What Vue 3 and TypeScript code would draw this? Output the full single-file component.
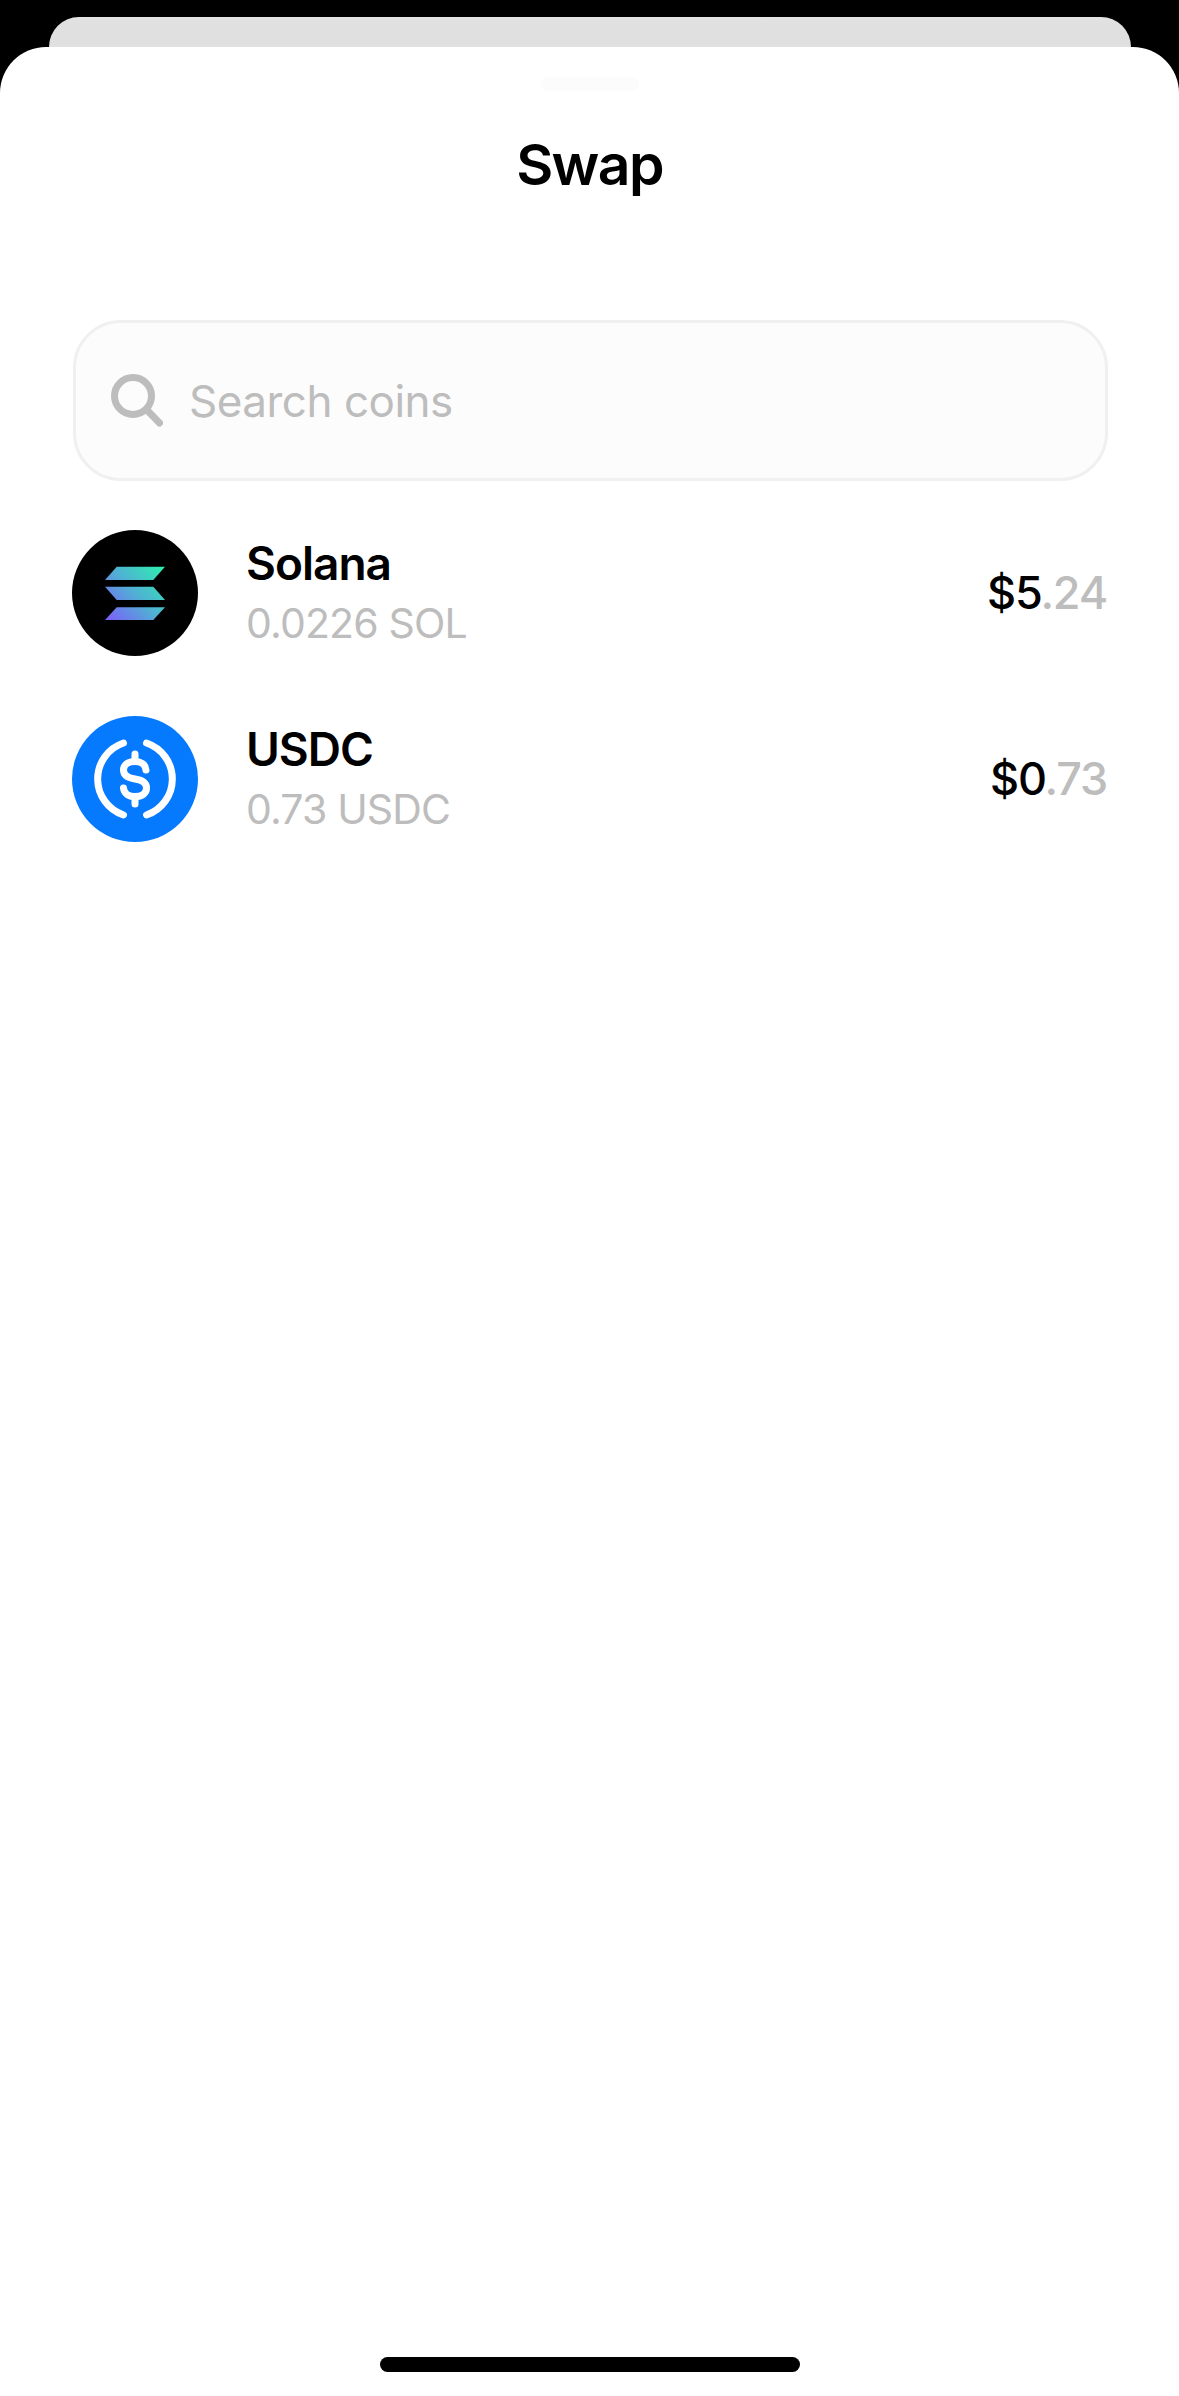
<template>
  <div class="screen">
    <div class="back-card"></div>
    <main class="sheet">
      <div class="handle"></div>
      <h1 class="title">Swap</h1>

      <div class="search">
        <svg class="search-icon" viewBox="0 0 52 53" fill="none" stroke="#bdbdbd" stroke-width="7" stroke-linecap="round">
          <circle cx="22" cy="22" r="18.5" />
          <path d="M35.5 35.5 L48.5 49" />
        </svg>
        <span class="placeholder">Search coins</span>
      </div>

      <ul class="coins">
        <li v-for="coin in coins" :key="coin.name" class="coin">
          <svg v-if="coin.name === 'Solana'" class="coin-logo" viewBox="0 0 126 126">
            <defs>
              <linearGradient id="sol" gradientUnits="userSpaceOnUse" x1="93" y1="36" x2="33" y2="90">
                <stop offset="0" stop-color="#2cf2ac" />
                <stop offset="0.5" stop-color="#50b0d4" />
                <stop offset="1" stop-color="#7d5cfa" />
              </linearGradient>
            </defs>
            <circle cx="63" cy="63" r="63" fill="#000" />
            <path fill="url(#sol)" d="M44.7 36.7H93L81.3 50H33z" />
            <path fill="url(#sol)" d="M33 56.7H81.3L93 70H44.7z" />
            <path fill="url(#sol)" d="M44.7 77.3H93L81.3 90H33z" />
          </svg>
          <svg v-else class="coin-logo" viewBox="0 0 126 126" fill="none">
            <circle cx="63" cy="63" r="63" fill="#057aff" />
            <g stroke="#fff" stroke-width="7" stroke-linecap="round">
              <path d="M51.5 27 A38 38 0 0 0 51.5 99" />
              <path d="M74.5 27 A38 38 0 0 1 74.5 99" />
              <path d="M74 54 C73.5 48 69 45.5 63 45.5 C56 45.5 51.5 49 51.5 54 C51.5 60 56.5 62 63 63 C69.5 64 74.5 66.5 74.5 72 C74.5 77.5 70 80.5 63 80.5 C56.5 80.5 52 77.5 51.5 72" />
              <path d="M63 38 V45 M63 81 V88" />
            </g>
          </svg>
          <div class="coin-info">
            <div class="coin-name">{{ coin.name }}</div>
            <div class="coin-amount">{{ coin.amount }}</div>
          </div>
          <div class="coin-price">{{ coin.whole }}<span class="cents">{{ coin.cents }}</span></div>
        </li>
      </ul>

      <div class="home-bar"></div>
    </main>
  </div>
</template>

<script setup lang="ts">
type Coin = {
  name: string
  amount: string
  whole: string
  cents: string
}

const coins: Coin[] = [
  { name: 'Solana', amount: '0.0226 SOL', whole: '$5', cents: '.24' },
  { name: 'USDC', amount: '0.73 USDC', whole: '$0', cents: '.73' },
]
</script>

<style scoped>
.screen {
  display: flex;
  flex-direction: column;
  height: 2396px;
  padding-top: 17px;
  box-sizing: border-box;
  background: #000;
  font-family: Inter, 'Liberation Sans', sans-serif;
  overflow: hidden;
}

.back-card {
  flex: none;
  height: 30px;
  margin: 0 48px 0 49px;
  border-radius: 34px 34px 0 0;
  background: linear-gradient(#e4e4e4, #e0e0e0 6px);
}

.sheet {
  flex: 1;
  display: flex;
  flex-direction: column;
  padding: 30px 72px 24px;
  border-radius: 46px 46px 0 0;
  background: #fff;
}

.handle {
  align-self: center;
  width: 98px;
  height: 14px;
  border-radius: 7px;
  background: #fcfcfc;
}

.title {
  margin: 39px 0 0;
  height: 70px;
  font-size: 57px;
  line-height: 70px;
  font-weight: 600;
  letter-spacing: -1.6px;
  text-align: center;
  color: #000;
}

.search {
  display: flex;
  align-items: center;
  gap: 26px;
  height: 161px;
  margin: 120px -1px 0 1px;
  padding: 0 35px;
  box-sizing: border-box;
  border: 3px solid #f0f0f0;
  border-radius: 48px;
  background: #fcfcfc;
}

.search-icon {
  flex: none;
  width: 52px;
  height: 53px;
}

.placeholder {
  font-size: 44px;
  letter-spacing: -0.5px;
  color: #bdbdbd;
}

.coins {
  display: flex;
  flex-direction: column;
  gap: 60px;
  margin: 49px 0 0;
  padding: 0;
  list-style: none;
}

.coin {
  display: flex;
  align-items: center;
}

.coin-logo {
  flex: none;
  width: 126px;
  height: 126px;
}

.coin-info {
  flex: 1;
  margin-left: 48px;
  padding-bottom: 3px;
}

.coin-name {
  font-size: 46px;
  line-height: 56px;
  font-weight: 600;
  letter-spacing: -1px;
  color: #000;
}

.coin-amount {
  margin-top: 7px;
  font-size: 41px;
  line-height: 50px;
  letter-spacing: -0.85px;
  color: #bdbdbd;
}

.coin-price {
  padding-bottom: 1px;
  font-size: 45px;
  font-weight: 500;
  letter-spacing: -1.2px;
  color: #000;
}

.cents {
  color: #bdbdbd;
}

.home-bar {
  align-self: center;
  width: 420px;
  height: 15px;
  margin-top: auto;
  border-radius: 8px;
  background: #000;
}
</style>
